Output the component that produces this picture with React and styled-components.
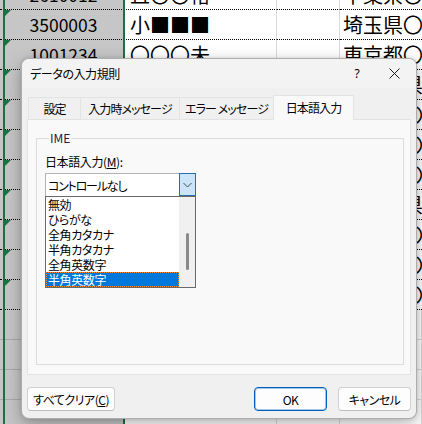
import styled, { createGlobalStyle } from "styled-components";

const GlobalStyle = createGlobalStyle`
  html, body {
    margin: 0;
    padding: 0;
    background: #fff;
  }
  body {
    width: 422px;
    height: 424px;
    overflow: hidden;
  }
`;

const UI_FONT = `"Noto Sans CJK JP", "Noto Sans", sans-serif`;

/* ---------- spreadsheet behind the dialog ---------- */

const Sheet = styled.div`
  position: relative;
  width: 422px;
  height: 424px;
  overflow: hidden;
  font-family: "Noto Sans CJK JP", sans-serif;
  color: #000;
`;

const Rows = styled.div`
  margin-top: -20px;
`;

const Row = styled.div`
  display: grid;
  grid-template-columns: 124px 153px 63px 1fr;
  height: 30px;
`;

const Cell = styled.div`
  position: relative;
  box-sizing: border-box;
  height: 30px;
  display: flex;
  align-items: center;
  justify-content: ${(p) => (p.$center ? "center" : "flex-start")};
  padding-left: ${(p) => p.$pad || 0}px;
  background: ${(p) => (p.$sel ? "#c6c6c6" : "#fff")};
  border-bottom: 1px
    ${(p) =>
      p.$data ? "dotted #000" : p.$sel ? "solid #a9a9a9" : "solid #dadada"};
  border-right: 1px solid ${(p) => (p.$sel ? "transparent" : "#dadada")};
  font-size: ${(p) => (p.$num ? "17.5px" : "20px")};
  white-space: nowrap;

  ${(p) =>
    p.$flag &&
    `
    &::before {
      content: "";
      position: absolute;
      top: 0;
      left: 5px;
      border-top: 6px solid #1e7145;
      border-right: 6px solid transparent;
    }
  `}
`;

const Selection = styled.div`
  position: absolute;
  left: 3px;
  top: 0;
  width: 122px;
  height: 100%;
  box-sizing: border-box;
  border-left: 2px solid #1e6f42;
  border-right: 2px solid #1e6f42;
  pointer-events: none;
`;

const DATA = [
  ["2610012", "且〇〇裕", "千葉県〇〇"],
  ["3500003", "小■■■", "埼玉県〇〇"],
  ["1001234", "〇〇〇未", "東京都〇〇"],
  ["2310023", "〇〇〇子", "神奈川県〇"],
  ["3300061", "〇〇〇郎", "埼玉県〇〇"],
  ["2740063", "〇〇〇美", "千葉県〇〇"],
  ["1500001", "〇〇〇太", "東京都〇〇"],
  ["2200012", "〇〇〇介", "神奈川県〇"],
  ["3100021", "〇〇〇恵", "茨城県〇〇"],
  ["3200807", "〇〇〇治", "栃木県〇〇"],
  ["3700801", "〇〇〇香", "群馬県〇〇"],
];

/* ---------- dialog ---------- */

const Dialog = styled.div`
  position: absolute;
  left: 21px;
  top: 58px;
  width: 396px;
  height: 361px;
  box-sizing: border-box;
  display: flex;
  flex-direction: column;
  background: #f0f0f0;
  border: 1px solid rgba(0, 0, 0, 0.28);
  border-radius: 8px;
  box-shadow: 0 6px 18px rgba(0, 0, 0, 0.28), 0 0 4px rgba(0, 0, 0, 0.12);
  font-family: ${UI_FONT};
  font-feature-settings: "palt";
  letter-spacing: -0.4px;
  font-size: 12px;
  color: #000;
  overflow: hidden;
`;

const TitleBar = styled.div`
  height: 29px;
  display: flex;
  align-items: center;
  padding-left: 8px;
  background: #f3f3f3;
`;

const TitleText = styled.div`
  flex: 1;
  font-size: 12px;
  line-height: 16px;
`;

const CaptionBtn = styled.div`
  width: ${(p) => p.$w}px;
  height: 29px;
  display: flex;
  align-items: center;
  justify-content: center;
  font-size: 12px;
  font-family: "Noto Sans", sans-serif;
`;

const Body = styled.div`
  flex: 1;
  display: flex;
  flex-direction: column;
  padding: 7px 5px 7px 5px;
`;

const TabStrip = styled.div`
  display: flex;
  align-items: flex-end;
  height: 24px;
  margin-left: 1px;
`;

const Tab = styled.div`
  position: relative;
  box-sizing: border-box;
  width: ${(p) => p.$w}px;
  height: ${(p) => (p.$active ? 25 : 22)}px;
  margin-bottom: ${(p) => (p.$active ? -1 : 0)}px;
  z-index: ${(p) => (p.$active ? 1 : 0)};
  display: flex;
  align-items: center;
  justify-content: center;
  border: 1px solid #e3e3e3;
  border-bottom: none;
  margin-right: -1px;
  background: ${(p) => (p.$active ? "#f9f9f9" : "#f0f0f0")};
  font-size: 12px;
  line-height: 16px;
  letter-spacing: -0.9px;
  white-space: nowrap;
  padding-top: ${(p) => (p.$active ? 0 : 1)}px;
`;

const Panel = styled.div`
  height: 256px;
  box-sizing: border-box;
  display: flex;
  flex-direction: column;
  padding: 10px 6px 9px 8px;
  background: #f9f9f9;
  border: 1px solid #e3e3e3;
`;

const Group = styled.fieldset`
  flex: 1;
  margin: 0;
  padding: 8px 0 0 8px;
  min-width: 0;
  border: 1px solid #dcdcdc;
`;

const Legend = styled.legend`
  margin-left: 4px;
  padding: 0 1px;
  font-size: 12px;
  line-height: 16px;
  letter-spacing: 0;
  color: #241c44;
`;

const Label = styled.div`
  font-size: 12px;
  line-height: 16px;
  margin-bottom: 3px;
`;

const Combo = styled.div`
  display: flex;
  width: 151px;
  height: 23px;
`;

const ComboField = styled.div`
  flex: 1;
  display: flex;
  align-items: center;
  padding-left: 2px;
  background: #fff;
  border-top: 1px solid #b3b3b3;
  border-left: 1px solid #b3b3b3;
  font-size: 12px;
  letter-spacing: -1.2px;
`;

const DropButton = styled.div`
  width: 17px;
  box-sizing: border-box;
  display: flex;
  align-items: center;
  justify-content: center;
  background: #cce4f7;
  border: 1px solid #2c6db0;
`;

const ListBox = styled.div`
  display: flex;
  width: 151px;
  height: 92px;
  box-sizing: border-box;
  background: #fff;
  border: 1px solid #6a6a6a;
`;

const Items = styled.div`
  flex: 1;
  display: flex;
  flex-direction: column;
`;

const Item = styled.div`
  height: 15px;
  box-sizing: border-box;
  padding-left: ${(p) => (p.$selected ? 1 : 2)}px;
  font-size: 12px;
  white-space: nowrap;
  color: ${(p) => (p.$selected ? "#fff" : "#000")};
  background: ${(p) => (p.$selected ? "#0078d7" : "transparent")};
  border: ${(p) => (p.$selected ? "1px dotted #ff8a28" : "none")};
  line-height: ${(p) => (p.$selected ? 13 : 15)}px;
`;

const ScrollBar = styled.div`
  width: 16px;
  display: flex;
  justify-content: center;
  padding-top: 36px;
  box-sizing: border-box;
  background: #f0f0f0;
`;

const Thumb = styled.div`
  width: 3px;
  height: 37px;
  border-radius: 2px;
  background: #8a8a8a;
`;

const ButtonRow = styled.div`
  display: flex;
  align-items: center;
  margin-top: 12px;
  height: 24px;
`;

const Button = styled.button`
  box-sizing: border-box;
  width: ${(p) => p.$w}px;
  height: 24px;
  margin-left: ${(p) => p.$ml || 0};
  padding: 0;
  background: #fdfdfd;
  border: 1px solid ${(p) => (p.$primary ? "#005fb8" : "#d0d0d0")};
  border-bottom-color: ${(p) => (p.$primary ? "#005fb8" : "#bdbdbd")};
  box-shadow: ${(p) =>
    p.$primary ? "inset 0 0 0 1px rgba(0, 95, 184, 0.35)" : "none"};
  border-radius: 4px;
  font-family: ${UI_FONT};
  font-feature-settings: "palt";
  letter-spacing: -0.5px;
  font-size: 12px;
  color: #000;
`;

const Key = styled.span`
  text-decoration: underline;
`;

const TABS = [
  { label: "設定", w: 53 },
  { label: "入力時メッセージ", w: 100 },
  { label: "エラー メッセージ", w: 95 },
  { label: "日本語入力", w: 81, active: true },
];

const OPTIONS = ["無効", "ひらがな", "全角カタカナ", "半角カタカナ", "全角英数字", "半角英数字"];

function Spreadsheet() {
  const rows = [];
  for (let i = 0; i < 15; i++) {
    const d = DATA[i];
    const data = !!d;
    rows.push(
      <Row key={i}>
        <Cell $sel $data={data} $flag={data} $center $num $pad={4}>
          {d ? d[0] : ""}
        </Cell>
        <Cell $data={data} $pad={6}>
          {d ? d[1] : ""}
        </Cell>
        <Cell $data={data} />
        <Cell $data={data} $pad={3}>
          {d ? d[2] : ""}
        </Cell>
      </Row>
    );
  }
  return (
    <>
      <Rows>{rows}</Rows>
      <Selection />
    </>
  );
}

export default function App() {
  return (
    <>
      <GlobalStyle />
      <Sheet>
        <Spreadsheet />
        <Dialog>
          <TitleBar>
            <TitleText>データの入力規則</TitleText>
            <CaptionBtn $w={30}>?</CaptionBtn>
            <CaptionBtn $w={44}>
              <svg width="11" height="11" viewBox="0 0 11 11">
                <path d="M0.5 0.5 L10.5 10.5 M10.5 0.5 L0.5 10.5" stroke="#1a1a1a" strokeWidth="1" />
              </svg>
            </CaptionBtn>
          </TitleBar>
          <Body>
            <TabStrip>
              {TABS.map((t) => (
                <Tab key={t.label} $w={t.w} $active={t.active}>
                  {t.label}
                </Tab>
              ))}
            </TabStrip>
            <Panel>
              <Group>
                <Legend>IME</Legend>
                <Label>
                  日本語入力(<Key>M</Key>):
                </Label>
                <Combo>
                  <ComboField>コントロールなし</ComboField>
                  <DropButton>
                    <svg width="9" height="6" viewBox="0 0 9 6">
                      <path d="M0.5 1 L4.5 5 L8.5 1" fill="none" stroke="#4a4a4a" strokeWidth="1" />
                    </svg>
                  </DropButton>
                </Combo>
                <ListBox>
                  <Items>
                    {OPTIONS.map((o, i) => (
                      <Item key={o} $selected={i === OPTIONS.length - 1}>
                        {o}
                      </Item>
                    ))}
                  </Items>
                  <ScrollBar>
                    <Thumb />
                  </ScrollBar>
                </ListBox>
              </Group>
            </Panel>
            <ButtonRow>
              <Button $w={88}>
                すべてクリア(<Key>C</Key>)
              </Button>
              <Button $w={73} $primary $ml="auto">
                OK
              </Button>
              <Button $w={73} $ml="11px">
                キャンセル
              </Button>
            </ButtonRow>
          </Body>
        </Dialog>
      </Sheet>
    </>
  );
}
